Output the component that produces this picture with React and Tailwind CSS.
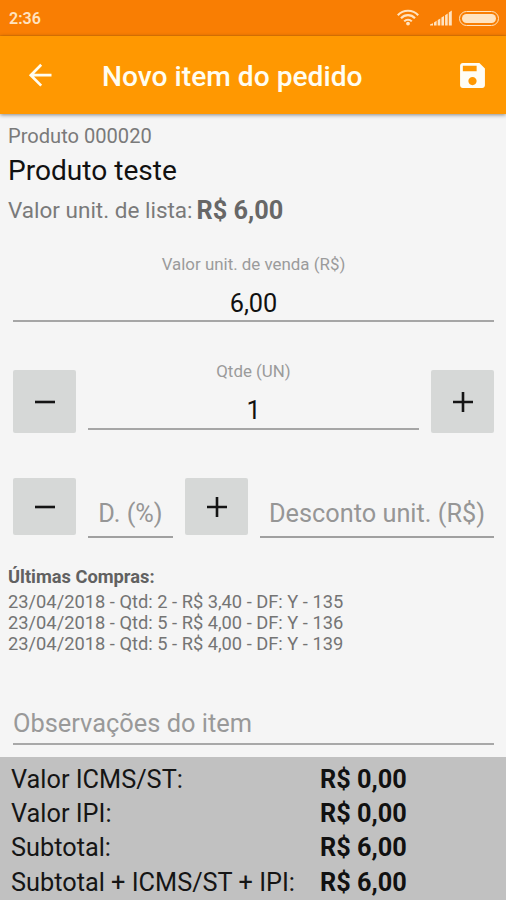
import { clsx } from 'clsx'

const purchases = [
  '23/04/2018 - Qtd: 2 - R$ 3,40 - DF: Y - 135',
  '23/04/2018 - Qtd: 5 - R$ 4,00 - DF: Y - 136',
  '23/04/2018 - Qtd: 5 - R$ 4,00 - DF: Y - 139',
]

const totals = [
  { label: 'Valor ICMS/ST:', value: 'R$ 0,00' },
  { label: 'Valor IPI:', value: 'R$ 0,00' },
  { label: 'Subtotal:', value: 'R$ 6,00' },
  { label: 'Subtotal + ICMS/ST + IPI:', value: 'R$ 6,00' },
]

const StatusBar = () => (
  <div className="flex h-9 items-center justify-between border-b border-[#ea7b04] bg-[#f97e03] pl-[9px] pr-[7px] text-[#ffe3c0]">
    <span className="mt-[3px] text-[16px] font-semibold leading-5">2:36</span>
    <div className="flex items-center">
      <svg width="22" height="17" viewBox="0 0 22 17" fill="none" stroke="currentColor" strokeWidth="2.1">
        <path d="M0.8 6.2C6.2 0.2 15.8 0.2 21.2 6.2" />
        <path d="M4 9.3C7.8 5.1 14.2 5.1 18 9.3" />
        <path d="M7.2 12.4C9.3 10.1 12.7 10.1 14.8 12.4" />
        <circle cx="11" cy="14.6" r="1.9" fill="currentColor" stroke="none" />
      </svg>
      <svg className="ml-[11px] mt-px" width="22" height="16" viewBox="0 0 22 16" fill="currentColor">
        <path d="M0 15.5V14.6L3 13.2V15.5Z" />
        <path d="M4 15.5V12.4L6.6 10.8V15.5Z" />
        <path d="M7.7 15.5V10L10.3 8.4V15.5Z" />
        <path d="M11.4 15.5V7.6L14 6V15.5Z" />
        <path d="M15.1 15.5V5.2L17.7 3.6V15.5Z" />
        <path d="M18.8 15.5V2.4L21.8 0.6V15.5Z" />
      </svg>
      <div className="ml-[7px] mt-px flex h-[15px] w-10 rounded-full border-[1.5px] border-current p-[2px]">
        <div className="flex-1 rounded-full bg-current" />
      </div>
    </div>
  </div>
)

const AppBar = () => (
  <header className="relative flex h-[78px] items-center bg-[#ff9801] pl-7 pr-[19px] text-[#fffdf0] shadow-[0_1px_4px_rgba(0,0,0,0.45)]">
    <svg width="24" height="24" viewBox="0 0 24 24" fill="none" stroke="currentColor" strokeWidth="2.7">
      <path d="M23.5 12.2H3M13.2 1.8L2.8 12.2L13.2 22.6" />
    </svg>
    <h1 className="ml-[50px] flex-1 pt-[5px] text-[28.2px] font-medium">Novo item do pedido</h1>
    <svg width="29" height="29" viewBox="1.5 1.5 21 21" fill="#fffdf5">
      <path d="M17 3H5c-1.11 0-2 .9-2 2v14c0 1.1.89 2 2 2h14c1.1 0 2-.9 2-2V7l-4-4zm-5 16c-1.66 0-3-1.34-3-3s1.34-3 3-3 3 1.34 3 3-1.34 3-3 3zm3-10H5V5h10v4z" />
    </svg>
  </header>
)

const StepButton = ({ plus, short }) => (
  <button
    className={clsx(
      'flex w-[63px] shrink-0 items-center justify-center rounded-[2px] bg-[#d6d8d7] text-[#151515]',
      short ? 'h-[57px]' : 'h-[63px]',
    )}
  >
    <svg width="20" height="20" viewBox="0 0 20 20" fill="none" stroke="currentColor" strokeWidth="2.6">
      <path d={plus ? 'M0 10H20M10 0V20' : 'M0 10H20'} />
    </svg>
  </button>
)

const Field = ({ label, value }) => (
  <div className="flex-1 border-b-2 border-[#a6a6a6] text-center">
    <p className="text-[16.9px] leading-5 text-[#9b9b9b]">{label}</p>
    <p className="mt-[15px] text-[25.3px] leading-[30px] text-[#111]">{value}</p>
  </div>
)

export default function App() {
  return (
    <div className="flex h-[900px] w-[506px] flex-col overflow-hidden bg-[#f5f5f5] font-[Roboto,sans-serif]">
      <StatusBar />
      <AppBar />

      <main className="flex-1">
        {/* Product */}
        <section className="px-2 pt-[10px] text-[#7a7a7a]">
          <p className="text-[20.1px] leading-6">Produto 000020</p>
          <h2 className="mt-[7px] text-[28.1px] leading-8 text-[#111]">Produto teste</h2>
          <p className="mt-[9px] flex items-center text-[22.5px] leading-7">
            Valor unit. de lista:
            <b className="ml-1 pt-0.5 text-[25.3px] font-bold leading-[26px] text-[#676767]">R$ 6,00</b>
          </p>
        </section>

        {/* Price and quantity */}
        <section className="px-3 pl-[13px]">
          <div className="mt-[30px] flex h-[68px]">
            <Field label="Valor unit. de venda (R$)" value="6,00" />
          </div>
          <div className="mt-[39px] flex h-[72px] gap-3">
            <div className="pt-[9px]">
              <StepButton />
            </div>
            <div className="flex h-[69px] flex-1">
              <Field label="Qtde (UN)" value="1" />
            </div>
            <div className="pt-[9px]">
              <StepButton plus />
            </div>
          </div>

          {/* Discount */}
          <div className="mt-[45px] flex h-[60px] gap-3 text-[25.3px] text-[#969696]">
            <StepButton short />
            <p className="w-[85px] border-b-2 border-[#a0a0a0] pt-[21px] text-center leading-[30px]">D. (%)</p>
            <StepButton plus short />
            <p className="flex-1 whitespace-nowrap border-b-2 border-[#a0a0a0] pt-[21px] text-center leading-[30px]">
              Desconto unit. (R$)
            </p>
          </div>
        </section>

        {/* Last purchases */}
        <section className="px-2 pt-[28px] text-[18.3px] leading-[21px] text-[#747474]">
          <h3 className="mb-1 font-bold text-[#616161]">Últimas Compras:</h3>
          {purchases.map((line) => (
            <p key={line}>{line}</p>
          ))}
        </section>

        <p className="ml-[13px] mr-3 mt-[54px] h-[37px] border-b-2 border-[#a8a8a8] text-[25.4px] leading-[30px] text-[#999]">
          Observações do item
        </p>
      </main>

      {/* Totals */}
      <footer className="h-[143px] bg-[#c1c1c1] pl-[11px] pt-[5.6px] text-[25.3px] leading-[34.4px] text-[#151515]">
        {totals.map(({ label, value }) => (
          <div key={label} className="flex">
            <span className="w-[309px]">{label}</span>
            <b className="font-bold text-[#111]">{value}</b>
          </div>
        ))}
      </footer>
    </div>
  )
}
